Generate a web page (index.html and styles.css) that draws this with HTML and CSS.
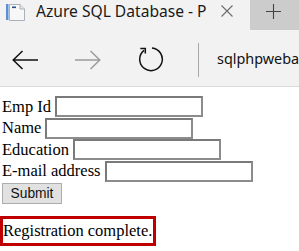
FILE: index.html
```html
<!DOCTYPE html>
<html>
<head>
<meta charset="utf-8">
<link rel="stylesheet" href="styles.css">
</head>
<body>
<div class="tabbar">
  <div class="tab">
    <svg class="favicon" width="20" height="17" viewBox="0 0 20 17">
      <rect x="1" y="0" width="2.5" height="16" fill="#5b8fd0"/>
      <path d="M4.5 0.5 H15 L19.5 5 V16.5 H4.5 Z" fill="#f7f7f7" stroke="#a9b1ba" stroke-width="1"/>
      <path d="M15 0.5 V5 H19.5" fill="#e4e4e4" stroke="#a9b1ba" stroke-width="1"/>
      <rect x="7" y="2.5" width="4" height="1.6" fill="#2c4f86"/>
    </svg>
    <span class="title">Azure SQL Database - P</span>
    <svg class="close" width="12" height="12" viewBox="0 0 12 12">
      <path d="M0.5 0.5 L11.5 11.5 M11.5 0.5 L0.5 11.5" stroke="#6b6b6b" stroke-width="1.1" fill="none"/>
    </svg>
  </div>
  <div class="newtab">
    <svg width="15" height="15" viewBox="0 0 15 15">
      <path d="M7.5 0 V15 M0 7.5 H15" stroke="#444" stroke-width="1.1" fill="none"/>
    </svg>
  </div>
</div>
<div class="navbar">
  <svg class="back" width="26" height="20" viewBox="0 0 26 20">
    <path d="M1.2 10 H26 M10.5 1 L1.2 10 L10.5 19" stroke="#111" stroke-width="1.5" fill="none"/>
  </svg>
  <svg class="fwd" width="26" height="20" viewBox="0 0 26 20">
    <path d="M24.8 10 H0 M15.5 1 L24.8 10 L15.5 19" stroke="#9c9c9c" stroke-width="1.5" fill="none"/>
  </svg>
  <svg class="refresh" width="28" height="26" viewBox="0 0 28 26">
    <path d="M14.98 2.04 A11.3 11.3 0 1 1 7.04 4.4" stroke="#111" stroke-width="1.5" fill="none"/>
    <path d="M3.3 2.6 H8.3 V7.6" stroke="#111" stroke-width="1.5" fill="none"/>
  </svg>
  <span class="sep"></span>
  <span class="url">sqlphpwebapp.azurewebsites.net</span>
</div>
<main class="content">
  <form class="form">
    <div class="row"><label class="lbl">Emp Id</label><input class="field" type="text"></div>
    <div class="row"><label class="lbl">Name</label><input class="field" type="text"></div>
    <div class="row"><label class="lbl">Education</label><input class="field" type="text"></div>
    <div class="row"><label class="lbl">E-mail address</label><input class="field" type="text"></div>
    <button class="submit" type="button">Submit</button>
  </form>
  <div class="msg">Registration complete.</div>
</main>
</body>
</html>
```
FILE: styles.css
```css
html, body {
  margin: 0;
  padding: 0;
  background: #ffffff;
}
body {
  width: 299px;
  height: 251px;
  overflow: hidden;
}
.tabbar {
  display: flex;
  height: 30px;
  background: #f2f2f2;
}
.tab {
  flex: 1;
  min-width: 0;
  display: flex;
  align-items: flex-start;
  padding-left: 5px;
}
.favicon {
  margin-top: 4px;
  flex: none;
}
.title {
  margin-left: 11px;
  margin-top: 1px;
  font-family: "Noto Sans", sans-serif;
  font-size: 15.6px;
  line-height: 21px;
  color: #1a1a1a;
  white-space: nowrap;
}
.close {
  margin-left: auto;
  margin-right: 17px;
  margin-top: 5px;
  flex: none;
}
.newtab {
  width: 49px;
  height: 30px;
  background: #cccccc;
  display: flex;
  align-items: flex-start;
  padding-left: 16px;
  padding-top: 4px;
  box-sizing: border-box;
}
.navbar {
  display: flex;
  align-items: flex-start;
  height: 56px;
  background: #f2f2f2;
  border-bottom: 1px solid #dadada;
}
.back {
  margin-left: 12px;
  margin-top: 20px;
  flex: none;
}
.fwd {
  margin-left: 37px;
  margin-top: 20px;
  flex: none;
}
.refresh {
  margin-left: 36px;
  margin-top: 16px;
  flex: none;
}
.sep {
  width: 1px;
  height: 34px;
  background: #a8a8a8;
  margin-left: 33px;
  margin-top: 13px;
  flex: none;
}
.url {
  margin-left: 18px;
  margin-top: 19px;
  font-family: "Noto Sans", sans-serif;
  font-size: 14.4px;
  line-height: 20px;
  color: #111;
  white-space: nowrap;
  overflow: hidden;
  flex: 1;
  min-width: 0;
}
.content {
  padding-top: 9px;
}
.form {
  margin: 0;
  padding-left: 2px;
}
.row {
  display: flex;
  align-items: center;
  gap: 4px;
  height: 21.5px;
  font-family: "Liberation Serif", serif;
  font-size: 16.5px;
  color: #000;
}
.field {
  width: 148px;
  height: 21px;
  box-sizing: border-box;
  margin: 0;
  padding: 0;
  background: #fff;
  border: 2px solid #8c8c8c;
  border-top-color: #7a7a7a;
  border-left-color: #7a7a7a;
}
.submit {
  display: block;
  margin-top: 1px;
  width: 60px;
  height: 21px;
  padding: 0;
  box-sizing: border-box;
  background: #e1e1e1;
  border: 1px solid #adadad;
  font-family: "Liberation Sans", sans-serif;
  font-size: 13.8px;
  color: #111;
}
.msg {
  width: fit-content;
  margin-top: 12px;
  border: 3px solid #c00000;
  font-family: "Liberation Serif", serif;
  font-size: 16.5px;
  line-height: 24px;
  color: #000;
  padding: 0 1px 0 0;
}
```
